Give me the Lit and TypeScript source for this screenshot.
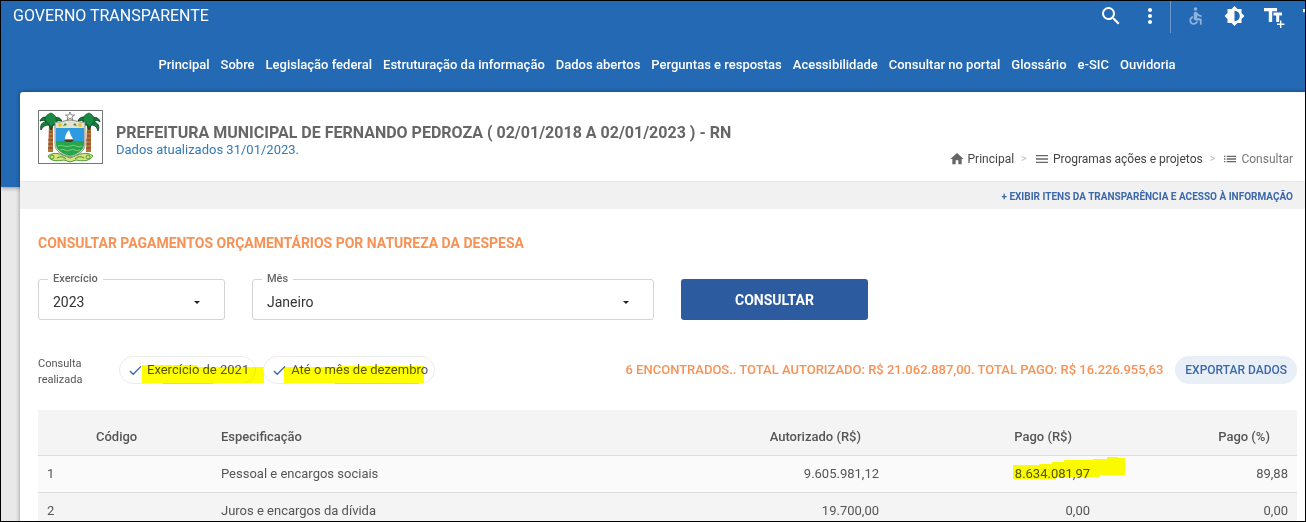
import { LitElement, html, css, svg } from "lit";
import { customElement } from "lit/decorators.js";

const NAV = [
  "Principal",
  "Sobre",
  "Legislação federal",
  "Estruturação da informação",
  "Dados abertos",
  "Perguntas e respostas",
  "Acessibilidade",
  "Consultar no portal",
  "Glossário",
  "e-SIC",
  "Ouvidoria",
];

const ROWS = [
  { id: "1", name: "Pessoal e encargos sociais", auth: "9.605.981,12", paid: "8.634.081,97", pct: "89,88", marked: true },
  { id: "2", name: "Juros e encargos da dívida", auth: "19.700,00", paid: "0,00", pct: "0,00", marked: false },
];

const icon = (body: unknown, cls = "icon") =>
  html`<svg class=${cls} viewBox="0 0 24 24" fill="currentColor" aria-hidden="true">${body}</svg>`;

const search = svg`<path d="M15.5 14h-.79l-.28-.27A6.47 6.47 0 0 0 16 9.5 6.5 6.5 0 1 0 9.5 16c1.61 0 3.09-.59 4.23-1.57l.27.28v.79l5 4.99L20.49 19l-4.99-5zm-6 0C7.01 14 5 11.99 5 9.5S7.01 5 9.5 5 14 7.01 14 9.5 11.99 14 9.5 14z"/>`;
const dots = svg`<path d="M12 8c1.1 0 2-.9 2-2s-.9-2-2-2-2 .9-2 2 .9 2 2 2zm0 2c-1.1 0-2 .9-2 2s.9 2 2 2 2-.9 2-2-.9-2-2-2zm0 6c-1.1 0-2 .9-2 2s.9 2 2 2 2-.9 2-2-.9-2-2-2z"/>`;
const accessible = svg`<circle cx="12" cy="4" r="2"/><path d="M19 13v-2c-1.54.02-3.09-.75-4.07-1.83l-1.29-1.43c-.17-.19-.38-.34-.61-.45-.01 0-.01-.01-.02-.01H13c-.35-.2-.75-.3-1.19-.26C10.76 7.11 10 8.04 10 9.09V15c0 1.1.9 2 2 2h5v5h2v-5.5c0-1.1-.9-2-2-2h-3v-3.45c1.29 1.07 3.25 1.94 5 1.95zm-6.17 5c-.41 1.16-1.52 2-2.83 2-1.66 0-3-1.34-3-3 0-1.31.84-2.41 2-2.83V12.1c-2.28.46-4 2.48-4 4.9 0 2.76 2.24 5 5 5 2.42 0 4.44-1.72 4.9-4h-2.07z"/>`;
const contrast = svg`<path d="M20 15.31L23.31 12 20 8.69V4h-4.69L12 .69 8.69 4H4v4.69L.69 12 4 15.31V20h4.69L12 23.31 15.31 20H20v-4.69zM12 18V6c3.31 0 6 2.69 6 6s-2.69 6-6 6z"/>`;
const textBigger = svg`<path d="M2 4h13v3.2h-4.800V18H6.800V7.200H2zM11.5 8.5H20v3h-2.800V18h-3v-6.500h-2.700zM18 16.500h1.400v3h3v1.400h-3v3H18v-3h-3v-1.400h3z"/>`;
const textSmaller = svg`<path d="M10 5h13v3.2h-4.500V18h-3.500V8.200H10z"/>`;
const home = svg`<path d="M10 20v-6h4v6h5v-8h3L12 3 2 12h3v8z"/>`;
const menu = svg`<path d="M3 18h18v-2H3v2zm0-5h18v-2H3v2zm0-7v2h18V6H3z"/>`;
const list = svg`<path d="M3 13h2v-2H3v2zm0 4h2v-2H3v2zm0-8h2V7H3v2zm4 4h14v-2H7v2zm0 4h14v-2H7v2zM7 7v2h14V7H7z"/>`;
const check = html`<svg class="check" viewBox="0 0 14 12" fill="none" stroke="currentColor" stroke-width="1.5" aria-hidden="true"><path d="M1 6.5 4.500 10 13 1.500"/></svg>`;

@customElement("coat-of-arms")
export class CoatOfArms extends LitElement {
  static styles = css`
    :host { display: block; flex: none; }
    .crest { display: block; width: 65px; height: 54px; }
  `;
  render() {
    const palm = svg`
      <path d="M-2 12 -3 40h5L2 12z" fill="#b8703a"/>
      <path d="M-2 16h4M-2 20h4M-2 24h4M-3 28h5M-3 32h5M-3 36h5" stroke="#6f3d1b" stroke-width=".8"/>
      <path d="M0 11C-3 3-9 4-11 9c3-1 5-1 6 1-4 0-6 3-5 8 2-4 5-5 8-5l2 5 2-5c4 0 6 2 7 6 2-5 0-8-4-9 2-2 4-2 6 0C10 5 4 3 0 11z" fill="#16803f" stroke="#0b4a25"/>
      <path d="M-6 8C-6 4-3 2 0 1c4 2 6 4 5 9l-5 5z" fill="#1b8a45" stroke="#0b4a25" stroke-width=".7"/>`;
    return html`<svg class="crest" viewBox="0 0 65 54" role="img" aria-label="Brasão do Rio Grande do Norte">
      <rect x=".5" y=".5" width="64" height="53" fill="#fff" stroke="#777"/>
      <path d="M10 46c6-5 13-2 22 2 9-4 17-7 23-2-4 6-11 5-17 4l-6 2-6-2c-6 1-13 2-16-4z" fill="#d3e67c" stroke="#4e9a35"/>
      <g transform="translate(13 2)">${palm}</g>
      <g transform="translate(51 2)">${palm}</g>
      <path d="M17 12c5 1 10-2 15-2s10 3 15 2v22c0 7-6 11-15 13-9-2-15-6-15-13z" fill="#e4e2d0" stroke="#777" stroke-width=".8"/>
      <path d="M18 18h28v14H18z" fill="#2c9be0"/>
      <path d="M18 31h28v3c0 6-6 10-14 12-8-2-14-6-14-12z" fill="#27a54c"/>
      <path d="M20 36q3-1.500 6 0t6 0 6 0 6 0M22 40q3-1.500 5 0t5 0 5 0 5 0" fill="none" stroke="#8bd47b" stroke-width=".8"/>
      <path d="M31 20c-3 3-4 6-4 9h8c-2-3-3-6-4-9z" fill="#fff"/>
      <path d="M26 30h10l-2 2h-6z" fill="#5c3520"/>
      <circle cx="22" cy="15" r="2" fill="#e7c928"/><circle cx="42" cy="15" r="2" fill="#e7c928"/>
      <path d="m25 16 2-3 2 2zM35 15l2-2 2 3z" fill="#3c8f3c"/>
      <path d="m32 2 1.300 3h3.200l-2.600 2 1 3.200-2.900-2-2.900 2 1-3.200-2.600-2h3.200z" fill="#fff" stroke="#555" stroke-width=".7"/>
      <circle cx="14" cy="47" r="2" fill="none" stroke="#4e9a35"/><circle cx="50" cy="47" r="2" fill="none" stroke="#4e9a35"/>
      <path d="M19 48q5-3 9 1M37 49q4-4 9-1" fill="none" stroke="#3f8a35"/>
    </svg>`;
  }
}

@customElement("app-root")
export class AppRoot extends LitElement {
  static styles = css`
    :host { display: block; font-family: Roboto, "Liberation Sans", sans-serif; font-size: 13px; line-height: 16px; color: #555; }
    * { box-sizing: border-box; }
    a { color: inherit; text-decoration: none; }
    button { font: inherit; border: 0; padding: 0; background: none; color: inherit; }
    .frame { height: 100vh; overflow: hidden; border: 1px solid #000; background: #e9e9e9; }
    .band { background: #2469b4; color: #fff; padding-bottom: 95px; box-shadow: 0 1px 4px rgba(0, 0, 0, .4); }
    .top { display: flex; justify-content: space-between; padding-left: 12px; height: 48px; overflow: hidden; }
    .brand { font-size: 16px; line-height: 30px; margin: 0; font-weight: 400; }
    .tools { display: flex; align-items: flex-start; }
    .tool { display: flex; justify-content: center; width: 39px; padding-top: 3px; flex: none; }
    .tool.dim { color: #8fb3dc; }
    .sep { width: 1px; height: 32px; background: #6c98cb; margin: 0 5px 0 1px; }
    .icon { display: block; flex: none; width: 24px; height: 24px; }
    .icon.mid { width: 21px; height: 24px; }
    .tools .last { width: 12px; justify-content: flex-start; overflow: hidden; }
    .nav { display: flex; justify-content: center; gap: 11px; padding: 8px 0 0 28px; height: 43px; font-weight: 500; white-space: nowrap; }
    .card { position: relative; margin: -95px 0 0 19px; min-height: 100vh; background: #fff; border-radius: 3px 0 0 0; box-shadow: 0 0 4px rgba(0, 0, 0, .4); }
    .head { display: flex; gap: 13px; height: 89px; padding: 18px 12px 0 18px; }
    .title { flex: 1; padding-top: 14px; white-space: nowrap; }
    .title h1 { margin: 0; font-size: 16px; line-height: 18px; font-weight: 700; color: #666; }
    .title p { margin: 0; line-height: 16px; color: #337ab7; }
    .crumbs { display: flex; align-items: center; align-self: flex-start; gap: 7px; padding-top: 41px; font-size: 12px; line-height: 16px; white-space: nowrap; }
    .crumb { display: flex; align-items: center; gap: 3px; color: #444; }
    .crumb.here { color: #777; }
    .crumb .icon { width: 16px; height: 16px; color: #666; }
    .gt { color: #bbb; font-size: 11px; }
    .strip { background: #f1f1f1; border-top: 1px solid #e8e8e8; height: 28px; padding-right: 12px; text-align: right; font-size: 10px; line-height: 30px; font-weight: 700; color: #3c68ab; }
    .body { padding: 25px 8px 0 18px; }
    .body h2 { margin: 0; font-size: 14px; line-height: 18px; font-weight: 700; color: #f79256; }
    .form { display: flex; gap: 27px; margin-top: 27px; }
    .field { position: relative; flex: none; border: 1px solid #d4d4d4; border-radius: 3px; height: 41px; }
    .field.year { width: 187px; }
    .field.month { width: 402px; }
    .field label { position: absolute; left: 9px; top: -8px; padding: 0 5px; font-size: 11px; line-height: 14px; font-weight: 500; background: #fff; color: #666; }
    .field select { appearance: none; width: 100%; height: 100%; border: 0; background: none; padding: 5px 14px 0; font: 14px/20px Roboto, sans-serif; color: #333; }
    .arrow { position: absolute; right: 24px; top: 21px; border: 3px solid transparent; border-top-color: #222; border-bottom: 0; pointer-events: none; }
    .form .go { width: 187px; height: 41px; border-radius: 3px; background: #2c5ba0; color: #fff; font-size: 14px; font-weight: 700; }
    .result { display: flex; align-items: center; margin-top: 36px; height: 28px; white-space: nowrap; }
    .done { width: 81px; padding-top: 3px; font-size: 11px; line-height: 16px; white-space: normal; }
    .chip { position: relative; display: flex; align-items: center; gap: 5px; height: 28px; margin-right: 7px; padding: 0 6px 0 9px; border: 1px solid #ececec; border-radius: 14px; }
    .check { width: 13px; height: 11px; color: #3c68ab; }
    .marker { position: absolute; overflow: visible; mix-blend-mode: multiply; fill: #ff0; pointer-events: none; }
    .marker.a { left: 22px; top: 7px; width: 122px; height: 20px; }
    .marker.b { left: 20px; top: 7px; width: 140px; height: 20px; }
    .marker.c { right: -35px; top: -9px; width: 112px; height: 22px; }
    .total { margin: 0 12px 0 auto; font-weight: 500; color: #f79256; }
    .result .export { height: 28px; padding: 0 10px; border-radius: 14px; background: #e9eff7; color: #3c68ab; font-size: 12px; font-weight: 500; }
    table { width: 100%; margin-top: 26px; border-collapse: collapse; table-layout: fixed; }
    th, td { padding: 0 9px; text-align: right; font-weight: 400; }
    th { height: 45px; padding-top: 10px; font-weight: 500; background: #f4f4f4; }
    td { height: 37px; background: #fafafa; border-top: 1px solid #dcdcdc; }
    tbody tr:nth-child(even) td { background: #f4f4f4; }
    th:nth-child(1) { padding-left: 58px; }
    th:nth-child(n + 3) { padding-right: 27px; }
    th:nth-child(-n + 2), td:nth-child(-n + 2) { text-align: left; }
    .c1 { width: 174px; }
    .c3 { width: 210px; }
    .c4 { width: 211px; }
    .c5 { width: 198px; }
    .mark { position: relative; display: inline-block; }
  `;

  render() {
    return html`
      <div class="frame">
        <header class="band">
          <div class="top">
            <p class="brand">GOVERNO TRANSPARENTE</p>
            <div class="tools">
              <button class="tool" aria-label="Pesquisar">${icon(search)}</button>
              <button class="tool" aria-label="Mais opções">${icon(dots)}</button>
              <span class="sep"></span>
              <button class="tool dim" aria-label="Acessibilidade">${icon(accessible, "icon mid")}</button>
              <button class="tool" aria-label="Contraste">${icon(contrast, "icon mid")}</button>
              <button class="tool" aria-label="Aumentar texto">${icon(textBigger)}</button>
              <button class="tool last" aria-label="Diminuir texto">${icon(textSmaller)}</button>
            </div>
          </div>
          <nav class="nav">${NAV.map((n) => html`<a href="#">${n}</a>`)}</nav>
        </header>
        <main class="card">
          <div class="head">
            <coat-of-arms></coat-of-arms>
            <div class="title">
              <h1>PREFEITURA MUNICIPAL DE FERNANDO PEDROZA ( 02/01/2018 A 02/01/2023 ) - RN</h1>
              <p>Dados atualizados 31/01/2023.</p>
            </div>
            <div class="crumbs">
              <a class="crumb" href="#">${icon(home)}Principal</a><span class="gt">&gt;</span>
              <a class="crumb" href="#">${icon(menu)}Programas ações e projetos</a><span class="gt">&gt;</span>
              <span class="crumb here">${icon(list)}Consultar</span>
            </div>
          </div>
          <div class="strip"><a href="#">+ EXIBIR ITENS DA TRANSPARÊNCIA E ACESSO À INFORMAÇÃO</a></div>
          <div class="body">
            <h2>CONSULTAR PAGAMENTOS ORÇAMENTÁRIOS POR NATUREZA DA DESPESA</h2>
            <form class="form">
              <div class="field year">
                <label for="year">Exercício</label>
                <select id="year"><option>2023</option></select><i class="arrow"></i>
              </div>
              <div class="field month">
                <label for="month">Mês</label>
                <select id="month"><option>Janeiro</option></select><i class="arrow"></i>
              </div>
              <button class="go" type="button">CONSULTAR</button>
            </form>
            <div class="result">
              <div class="done">Consulta<br />realizada</div>
              <div class="chip">${check}<span>Exercício de 2021</span>
                <svg class="marker a" viewBox="0 0 122 20" aria-hidden="true"><path d="M0 1h55v2h67v16H71v1H21v-1H0z"/></svg>
              </div>
              <div class="chip">${check}<span>Até o mês de dezembro</span>
                <svg class="marker b" viewBox="0 0 140 20" aria-hidden="true"><path d="M0 3h55V2h85v17h-5v1H51v-1H0z"/></svg>
              </div>
              <div class="total">6 ENCONTRADOS.. TOTAL AUTORIZADO: R$ 21.062.887,00. TOTAL PAGO: R$ 16.226.955,63</div>
              <button class="export">EXPORTAR DADOS</button>
            </div>
            <table>
              <colgroup><col class="c1" /><col /><col class="c3" /><col class="c4" /><col class="c5" /></colgroup>
              <thead>
                <tr><th>Código</th><th>Especificação</th><th>Autorizado (R$)</th><th>Pago (R$)</th><th>Pago (%)</th></tr>
              </thead>
              <tbody>
                ${ROWS.map((r) => html`<tr>
                  <td>${r.id}</td><td>${r.name}</td><td>${r.auth}</td>
                  <td><span class="mark">${r.paid}${r.marked
                    ? html`<svg class="marker c" viewBox="0 0 112 22" aria-hidden="true"><path d="M0 8h26V7h13V5h12V3h29V2h14V0h11v1h7v17H87v2H43v2H0z"/></svg>`
                    : ""}</span></td>
                  <td>${r.pct}</td>
                </tr>`)}
              </tbody>
            </table>
          </div>
        </main>
      </div>
    `;
  }
}
